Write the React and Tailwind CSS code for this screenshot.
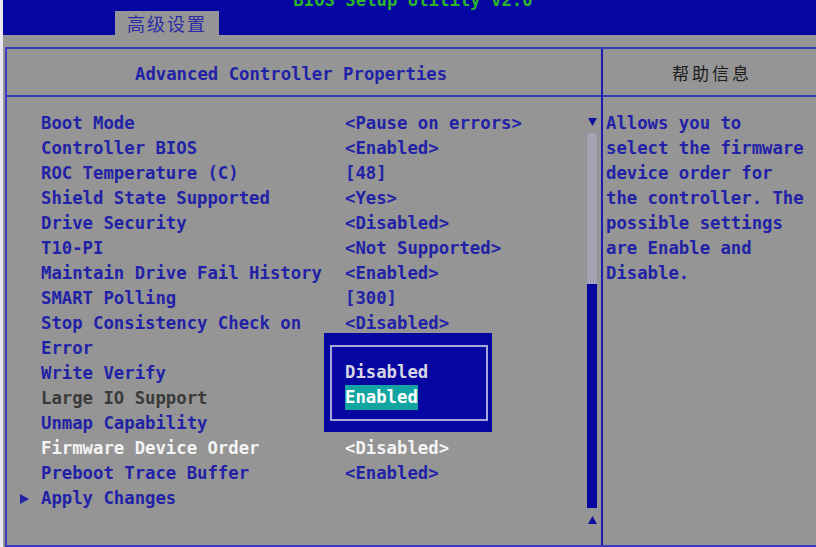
import React from 'react';

const mono = { fontFamily: '"DejaVu Sans Mono", "Liberation Mono", monospace' };
const cjk = { fontFamily: '"Noto Sans CJK SC", "Noto Sans", sans-serif' };

const rows = [
  { label: 'Boot Mode', value: '<Pause on errors>' },
  { label: 'Controller BIOS', value: '<Enabled>' },
  { label: 'ROC Temperature (C)', value: '[48]' },
  { label: 'Shield State Supported', value: '<Yes>' },
  { label: 'Drive Security', value: '<Disabled>' },
  { label: 'T10-PI', value: '<Not Supported>' },
  { label: 'Maintain Drive Fail History', value: '<Enabled>' },
  { label: 'SMART Polling', value: '[300]' },
  { label: 'Stop Consistency Check on', value: '<Disabled>' },
  { label: 'Error' },
  { label: 'Write Verify' },
  { label: 'Large IO Support', tone: 'dim' },
  { label: 'Unmap Capability' },
  { label: 'Firmware Device Order', value: '<Disabled>', tone: 'active' },
  { label: 'Preboot Trace Buffer', value: '<Enabled>' },
  { label: 'Apply Changes', submenu: true },
];

const help = [
  'Allows you to',
  'select the firmware',
  'device order for',
  'the controller. The',
  'possible settings',
  'are Enable and',
  'Disable.',
];

const toneClass = {
  dim: 'text-[#3a3a3a]',
  active: 'text-[#f4f4f4]',
};

function Row({ label, value, tone, submenu }) {
  const color = toneClass[tone] || 'text-[#2222a6]';
  return (
    <div className={`flex h-[25px] leading-[25px] whitespace-pre ${color}`}>
      <div className="w-[34px] pl-[13px] flex items-center">
        {submenu && (
          <svg width="9" height="10" viewBox="0 0 9 10">
            <path d="M0 0 L9 5 L0 10 Z" fill="#2222a6" />
          </svg>
        )}
      </div>
      <div className="w-[304px]">{label}</div>
      <div>{value}</div>
    </div>
  );
}

function Scrollbar() {
  return (
    <div className="w-[10px] mr-[4px] flex flex-col items-center pt-[21px]">
      <svg width="9" height="8" viewBox="0 0 9 8">
        <path d="M0 0 L9 0 L4.5 8 Z" fill="#1010a0" />
      </svg>
      <div className="mt-[7px] w-[10px] h-[151px] bg-[repeating-linear-gradient(90deg,#9a9aae_0px,#9a9aae_1px,#a6a6b6_1px,#a6a6b6_3px)]" />
      <div className="w-[10px] h-[224px] bg-[#0606a0]" />
      <svg className="mt-[8px]" width="9" height="8" viewBox="0 0 9 8">
        <path d="M4.5 0 L9 8 L0 8 Z" fill="#1010a0" />
      </svg>
    </div>
  );
}

function OptionPopup() {
  return (
    <div className="absolute left-[317px] top-[236px] w-[168px] h-[99px] bg-[#0606a0] pl-[6px] pr-[4px] pt-[12px] pb-[11px]">
      <div className="h-full border-2 border-[#a8a8d8] pl-[13px] pt-[13px]">
        <div className="h-[25px] leading-[25px] text-[#d6d6e4]">Disabled</div>
        <div className="h-[25px] leading-[25px]">
          <span className="inline-block bg-[#12a4a0] text-white">Enabled</span>
        </div>
      </div>
    </div>
  );
}

export default function App() {
  return (
    <div
      className="w-[816px] h-[547px] overflow-hidden bg-[#e8e8f2] pl-[3px] font-bold text-[17.3px]"
      style={mono}
    >
      <div className="h-full bg-[#959595] flex flex-col">
        <div className="h-[35px] bg-[#0606a0] flex flex-col shrink-0">
          <div className="h-[11px] flex justify-center pl-[7px]">
            <span className="-mt-[12px] leading-[25px] text-[#2cb42c] whitespace-pre">
              BIOS Setup Utility v2.0
            </span>
          </div>
          <div
            className="ml-[112px] w-[104px] h-[24px] bg-[#959595] flex items-center justify-center text-[18px] font-normal tracking-[2px] text-[#2a2aa4]"
            style={cjk}
          >
            高级设置
          </div>
        </div>

        <div className="mt-[12px] ml-[2px] w-[820px] flex-1 flex border-t-2 border-l-2 border-b-2 border-[#3a3abc]">
          <div className="w-[594px] flex flex-col">
            <div className="h-[48px] border-b-2 border-[#3a3abc] flex items-center pt-[5px] pl-[128px] text-[#2222a6] whitespace-pre">
              Advanced Controller Properties
            </div>
            <div className="flex-1 flex relative">
              <div className="flex-1 pt-[14px]">
                {rows.map((r) => (
                  <Row key={r.label} {...r} />
                ))}
              </div>
              <Scrollbar />
              <OptionPopup />
            </div>
          </div>

          <div className="w-[220px] flex flex-col border-l-2 border-[#1c1cae]">
            <div
              className="h-[48px] border-b-2 border-[#3a3abc] flex items-center justify-center pt-[2px] text-[17px] font-normal tracking-[3px] text-[#1c1c1c]"
              style={cjk}
            >
              帮助信息
            </div>
            <div className="pt-[14px] pl-[3px] text-[#2222a6]">
              {help.map((line) => (
                <div key={line} className="h-[25px] leading-[25px] whitespace-pre">
                  {line}
                </div>
              ))}
            </div>
          </div>
        </div>
      </div>
    </div>
  );
}
